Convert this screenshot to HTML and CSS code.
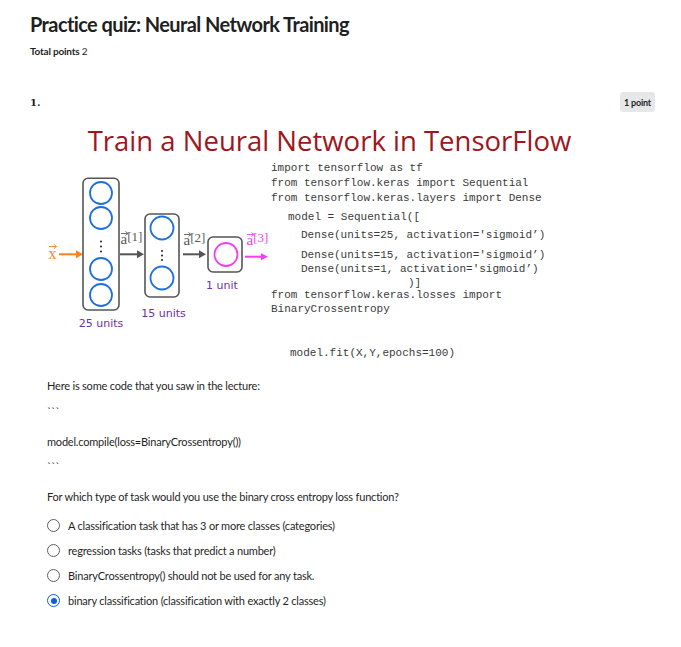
FILE: index.html
```html
<!DOCTYPE html>
<html lang="en">
<head>
<meta charset="utf-8">
<title>Practice quiz: Neural Network Training</title>
<link rel="stylesheet" href="styles.css">
</head>
<body>
<main class="quiz">
  <header class="quiz-header">
    <h1 class="quiz-title">Practice quiz: Neural Network Training</h1>
    <p class="total"><strong>Total points</strong> 2</p>
  </header>

  <section class="question">
    <div class="q-head">
      <span class="q-num">1.</span>
      <span class="badge">1 point</span>
    </div>

    <div class="q-body">
      <figure class="figure">
        <div class="fig-title">Train a Neural Network in TensorFlow</div>
        <div class="fig-body">
          <svg class="diagram" width="224" height="180" viewBox="47 157 224 180" xmlns="http://www.w3.org/2000/svg">
            <!-- input x -->
            <text x="48.5" y="258.5" class="lbl-x">x</text>
            <path d="M49 246.5 H56 M54 244.5 L56.5 246.5 L54 248.5" class="vec vec-x"/>
            <path d="M59 254.3 H77" class="arr arr-x"/>
            <path d="M76 250.3 L83 254.3 L76 258.3 Z" class="head-x"/>

            <!-- layer 1 -->
            <rect x="83" y="178.3" width="36" height="131.7" rx="5" class="box"/>
            <circle cx="101" cy="193" r="11" class="unit"/>
            <circle cx="101" cy="218" r="11" class="unit"/>
            <circle cx="101" cy="241.5" r="1.1" class="dot"/>
            <circle cx="101" cy="246.5" r="1.1" class="dot"/>
            <circle cx="101" cy="251.5" r="1.1" class="dot"/>
            <circle cx="101" cy="269" r="11" class="unit"/>
            <circle cx="101" cy="295" r="11" class="unit"/>
            <text x="101" y="327" class="units">25 units</text>

            <!-- a1 -->
            <text x="120.5" y="244" class="lbl-a">a<tspan class="sup" dy="-3.5">[1]</tspan></text>
            <path d="M121 233.5 H127.5 M125.5 231.5 L128 233.5 L125.5 235.5" class="vec vec-a"/>
            <path d="M120 254.3 H138" class="arr arr-a"/>
            <path d="M137 250.3 L144 254.3 L137 258.3 Z" class="head-a"/>

            <!-- layer 2 -->
            <rect x="145" y="214" width="34" height="83" rx="5" class="box"/>
            <circle cx="162" cy="228" r="11.5" class="unit"/>
            <circle cx="162" cy="251" r="1.1" class="dot"/>
            <circle cx="162" cy="255.5" r="1.1" class="dot"/>
            <circle cx="162" cy="260" r="1.1" class="dot"/>
            <circle cx="162" cy="278" r="11.5" class="unit"/>
            <text x="163.5" y="317" class="units">15 units</text>

            <!-- a2 -->
            <text x="183.5" y="245" class="lbl-a">a<tspan class="sup" dy="-3.5">[2]</tspan></text>
            <path d="M184 234.5 H190.5 M188.5 232.5 L191 234.5 L188.5 236.5" class="vec vec-a"/>
            <path d="M183 254.3 H200" class="arr arr-a"/>
            <path d="M199 250.3 L206 254.3 L199 258.3 Z" class="head-a"/>

            <!-- layer 3 -->
            <rect x="208" y="237" width="34" height="35" rx="5" class="box"/>
            <circle cx="226" cy="254.5" r="11.5" class="unit-out"/>
            <text x="222" y="288.5" class="units">1 unit</text>

            <!-- a3 -->
            <text x="246.5" y="245" class="lbl-a lbl-out">a<tspan class="sup" dy="-3.5">[3]</tspan></text>
            <path d="M247 234.5 H253.5 M251.5 232.5 L254 234.5 L251.5 236.5" class="vec vec-out"/>
            <path d="M245 256.7 H262" class="arr arr-out"/>
            <path d="M261 253.2 L268 256.7 L261 260.2 Z" class="head-out"/>
          </svg>

          <div class="code">
            <div class="cl">import tensorflow as tf</div>
            <div class="cl">from tensorflow.keras import Sequential</div>
            <div class="cl">from tensorflow.keras.layers import Dense</div>
            <div class="cl in-model">model = Sequential([</div>
            <div class="cl in-dense">Dense(units=25, activation='sigmoid’)</div>
            <div class="cl in-dense">Dense(units=15, activation='sigmoid’)</div>
            <div class="cl in-dense">Dense(units=1, activation='sigmoid’)</div>
            <div class="cl in-close">)]</div>
            <div class="cl">from tensorflow.keras.losses import</div>
            <div class="cl">BinaryCrossentropy</div>
            <div class="cl in-fit">model.fit(X,Y,epochs=100)</div>
          </div>
        </div>
      </figure>

      <p class="txt intro">Here is some code that you saw in the lecture:</p>
      <p class="txt fence fence-open">```</p>
      <p class="txt compile">model.compile(loss=BinaryCrossentropy())</p>
      <p class="txt fence fence-close">```</p>
      <p class="txt prompt">For which type of task would you use the binary cross entropy loss function?</p>

      <div class="options" role="radiogroup">
        <label class="option"><span class="radio"></span><span class="opt-text">A classification task that has 3 or more classes (categories)</span></label>
        <label class="option"><span class="radio"></span><span class="opt-text">regression tasks (tasks that predict a number)</span></label>
        <label class="option"><span class="radio"></span><span class="opt-text">BinaryCrossentropy() should not be used for any task.</span></label>
        <label class="option"><span class="radio radio-on"></span><span class="opt-text">binary classification (classification with exactly 2 classes)</span></label>
      </div>
    </div>
  </section>
</main>
</body>
</html>
```

FILE: styles.css
```css
* { box-sizing: border-box; }

html, body {
  margin: 0;
  padding: 0;
  background: #ffffff;
}

body {
  font-family: "Lato", "Noto Sans", sans-serif;
  color: #1f1f1f;
}

.quiz {
  width: 681px;
  padding: 12px 26px 0 30px;
}

.quiz-title {
  margin: 0;
  font-size: 20px;
  line-height: 24px;
  font-weight: 700;
  letter-spacing: -0.6px;
  color: #1f1f1f;
}

.total {
  margin: 9px 0 0;
  font-size: 10px;
  line-height: 12px;
  letter-spacing: -0.2px;
}

.total strong { font-weight: 700; }

.q-head {
  margin-top: 35px;
  height: 20px;
  display: flex;
  align-items: center;
  justify-content: space-between;
}

.q-num {
  font-family: "DejaVu Serif", serif;
  font-weight: 700;
  font-size: 10px;
  color: #1f1f1f;
}

.badge {
  width: 35px;
  height: 20px;
  border-radius: 3px;
  background: #e6e7e8;
  font-size: 9px;
  font-weight: 700;
  letter-spacing: -0.2px;
  display: flex;
  align-items: center;
  justify-content: center;
  color: #1f1f1f;
}

.q-body {
  padding-left: 17px;
}

.figure {
  margin: 13px 0 0;
  width: 565px;
}

.fig-title {
  font-family: "Open Sans", "DejaVu Sans", sans-serif;
  font-size: 27.5px;
  line-height: 32px;
  height: 32px;
  color: #9e1620;
  text-align: center;
  white-space: nowrap;
}

.fig-body {
  display: flex;
  align-items: flex-start;
}

.diagram {
  display: block;
  flex: none;
}

.box { fill: #ffffff; stroke: #555555; stroke-width: 1.6; }
.unit { fill: none; stroke: #1f6fe0; stroke-width: 1.8; }
.unit-out { fill: none; stroke: #f23ef0; stroke-width: 1.8; }
.dot { fill: #333333; }

.units {
  font-family: "DejaVu Sans", sans-serif;
  font-size: 11px;
  fill: #7030a0;
  text-anchor: middle;
}

.lbl-x {
  font-family: "Liberation Serif", serif;
  font-size: 16px;
  fill: #f7821e;
}

.lbl-a {
  font-family: "Liberation Serif", serif;
  font-size: 15px;
  fill: #595959;
}

.lbl-a .sup { font-size: 13px; }
.lbl-out { fill: #f23ef0; }

.vec { fill: none; stroke-width: 0.9; }
.vec-x { stroke: #f7821e; }
.vec-a { stroke: #595959; }
.vec-out { stroke: #f23ef0; }

.arr { fill: none; stroke-width: 2; }
.arr-x { stroke: #f7821e; }
.arr-a { stroke: #555555; }
.arr-out { stroke: #f23ef0; }
.head-x { fill: #f7821e; }
.head-a { fill: #555555; }
.head-out { fill: #f23ef0; }

.code {
  font-family: "Liberation Mono", "DejaVu Sans Mono", monospace;
  font-size: 11px;
  color: #3a3a3a;
  padding-top: 3.7px;
}

.cl { line-height: 14px; height: 14px; white-space: pre; }
.cl:nth-child(2), .cl:nth-child(3) { margin-top: 1.3px; }
.cl:nth-child(4) { margin-top: 5px; }
.cl:nth-child(5) { margin-top: 3.7px; }
.cl:nth-child(6) { margin-top: 6px; }
.cl:nth-child(7) { margin-top: 0.3px; }
.cl:nth-child(8) { margin-top: 0; }
.cl:nth-child(9) { margin-top: -2.3px; }
.cl:nth-child(10) { margin-top: 0; }
.cl:nth-child(11) { margin-top: 29.7px; }

.in-model { padding-left: 17px; }
.in-dense { padding-left: 30px; }
.in-close { padding-left: 137px; }
.in-fit { padding-left: 19px; }

.txt {
  margin: 0;
  font-size: 11px;
  line-height: 14px;
  letter-spacing: -0.2px;
  color: #1f1f1f;
}

.intro { margin-top: 19px; }
.fence-open { margin-top: 12px; }
.compile { margin-top: 16px; }
.fence-close { margin-top: 11px; }
.prompt { margin-top: 16px; }

.options {
  margin-top: 9.5px;
  display: flex;
  flex-direction: column;
}

.option {
  height: 25px;
  display: flex;
  align-items: center;
  gap: 8px;
  font-size: 11px;
  letter-spacing: -0.2px;
  color: #1f1f1f;
}

.radio {
  flex: none;
  width: 13px;
  height: 13px;
  border: 1.5px solid #616161;
  border-radius: 50%;
  display: flex;
  align-items: center;
  justify-content: center;
}

.radio-on {
  border-color: #0b5fd6;
}

.radio-on::after {
  content: "";
  width: 6px;
  height: 6px;
  border-radius: 50%;
  background: #0b5fd6;
}
```
